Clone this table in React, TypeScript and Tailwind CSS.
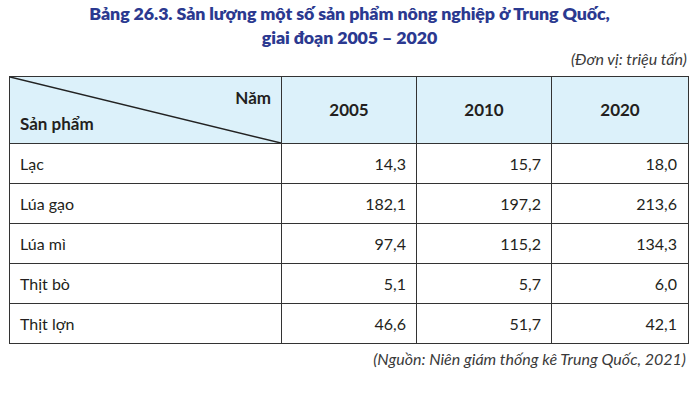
import React from 'react'

const rows: [string, string, string, string][] = [
  ['Lạc', '14,3', '15,7', '18,0'],
  ['Lúa gạo', '182,1', '197,2', '213,6'],
  ['Lúa mì', '97,4', '115,2', '134,3'],
  ['Thịt bò', '5,1', '5,7', '6,0'],
  ['Thịt lợn', '46,6', '51,7', '42,1'],
]

const years = ['2005', '2010', '2020']

export default function App() {
  return (
    <div className="w-[699px] h-[402px] bg-white text-[#231f20] font-['Lato','Noto_Sans',sans-serif]">
      <div className="pt-[1px] text-center text-[#2b3990] font-extrabold text-[17.8px] leading-[24px] tracking-[-0.1px]">
        <div>Bảng 26.3. Sản lượng một số sản phẩm nông nghiệp ở Trung Quốc,</div>
        <div>giai đoạn 2005 – 2020</div>
      </div>

      <div className="ml-[9px] w-[679px]">
        <div className="text-right italic text-[16px] leading-[20px] text-[#3a3a3a] pr-[1px] mb-[7px]">
          (Đơn vị: triệu tấn)
        </div>

        <table className="w-[679px] table-fixed border-collapse border-[1.5px] border-[#333]">
          <colgroup>
            <col className="w-[272px]" />
            <col className="w-[135px]" />
            <col className="w-[135px]" />
            <col className="w-[137px]" />
          </colgroup>
          <thead>
            <tr className="bg-[#dcf1fa] h-[66px]">
              <th className="relative border border-[#333] p-0 font-bold text-[17px]">
                <svg
                  className="absolute inset-0 w-full h-full"
                  viewBox="0 0 272 66"
                  preserveAspectRatio="none"
                >
                  <line x1="0" y1="0" x2="272" y2="66" stroke="#222" strokeWidth="1.5" />
                </svg>
                <div className="flex flex-col h-[66px] px-[10px] pt-[11px]">
                  <span className="self-end leading-[20px]">Năm</span>
                  <span className="self-start leading-[20px] mt-[6px]">Sản phẩm</span>
                </div>
              </th>
              {years.map((y) => (
                <th key={y} className="border border-[#333] font-bold text-[17px] text-center">
                  {y}
                </th>
              ))}
            </tr>
          </thead>
          <tbody>
            {rows.map((r) => (
              <tr key={r[0]} className="h-[40px] text-[16px]">
                <td className="border border-[#333] pl-[10px]">{r[0]}</td>
                <td className="border border-[#333] text-right pr-[10px]">{r[1]}</td>
                <td className="border border-[#333] text-right pr-[10px]">{r[2]}</td>
                <td className="border border-[#333] text-right pr-[11px]">{r[3]}</td>
              </tr>
            ))}
          </tbody>
        </table>

        <div className="text-right italic text-[16px] leading-[20px] text-[#3a3a3a] pr-[2px] mt-[5px]">
          (Nguồn: Niên giám thống kê Trung Quốc, 2021)
        </div>
      </div>
    </div>
  )
}
